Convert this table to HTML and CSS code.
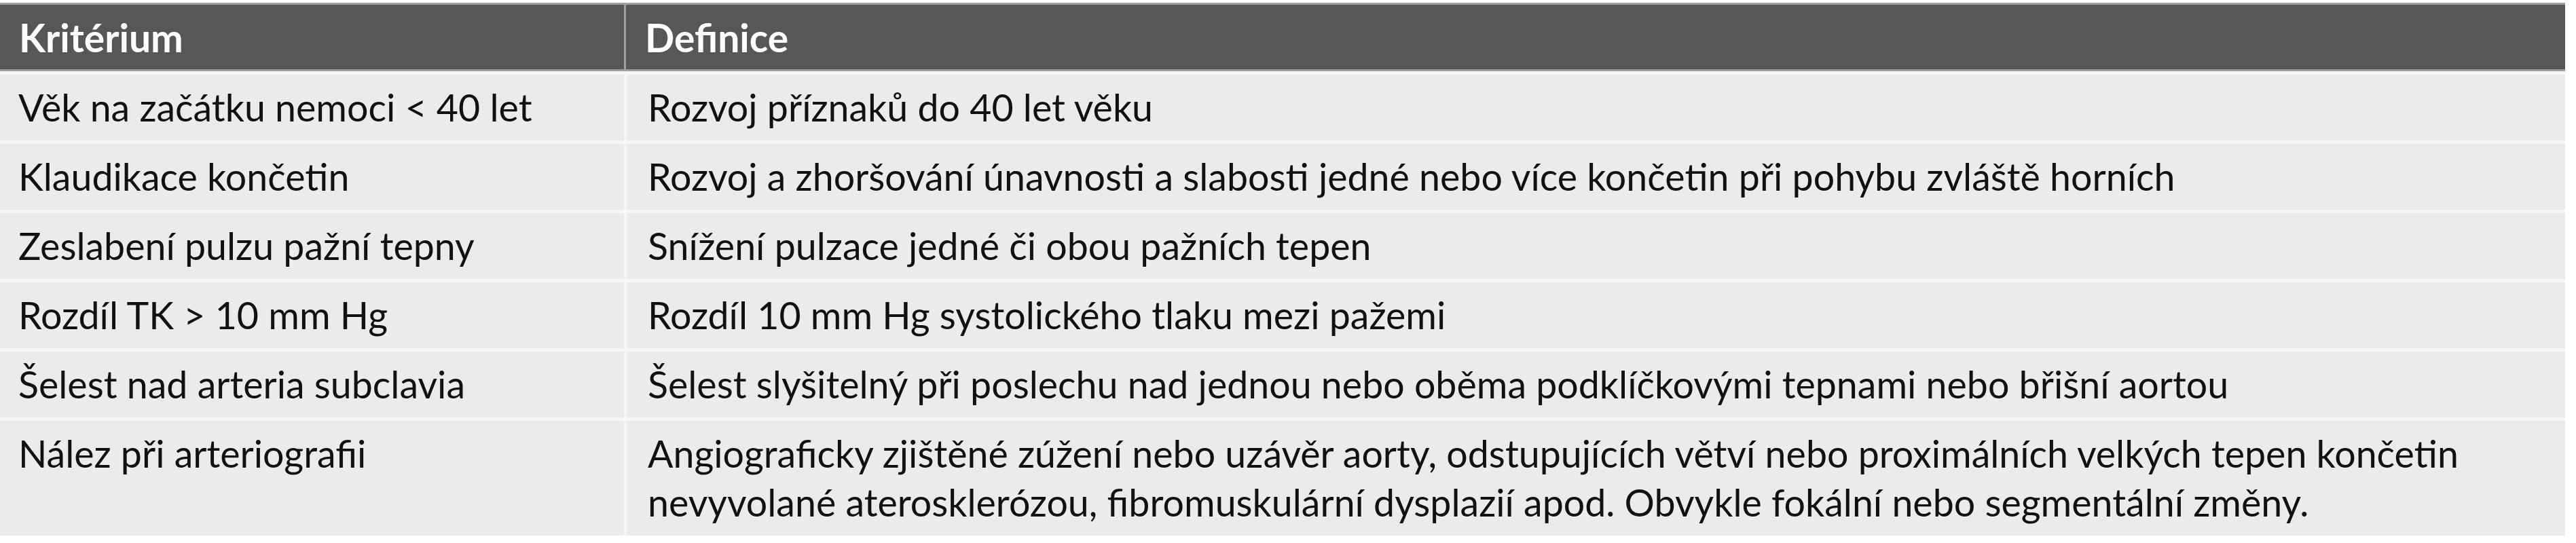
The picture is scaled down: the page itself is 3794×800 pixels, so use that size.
FILE: index.html
```html
<!DOCTYPE html>
<html lang="cs">
<head>
<meta charset="utf-8">
<title>Kritéria</title>
<link rel="stylesheet" href="styles.css">
</head>
<body>
<div class="table">
  <div class="head">
    <div class="th">Kritérium</div>
    <div class="th">Definice</div>
  </div>
  <div class="row">
    <div class="td">Věk na začátku nemoci &lt; 40 let</div>
    <div class="td">Rozvoj příznaků do 40 let věku</div>
  </div>
  <div class="row">
    <div class="td">Klaudikace končetin</div>
    <div class="td">Rozvoj a zhoršování únavnosti a slabosti jedné nebo více končetin při pohybu zvláště horních</div>
  </div>
  <div class="row">
    <div class="td">Zeslabení pulzu pažní tepny</div>
    <div class="td">Snížení pulzace jedné či obou pažních tepen</div>
  </div>
  <div class="row">
    <div class="td">Rozdíl TK &gt; 10 mm Hg</div>
    <div class="td">Rozdíl 10 mm Hg systolického tlaku mezi pažemi</div>
  </div>
  <div class="row">
    <div class="td">Šelest nad arteria subclavia</div>
    <div class="td">Šelest slyšitelný při poslechu nad jednou nebo oběma podklíčkovými tepnami nebo břišní aortou</div>
  </div>
  <div class="row">
    <div class="td">Nález při arteriografii</div>
    <div class="td">Angiograficky zjištěné zúžení nebo uzávěr aorty, odstupujících větví nebo proximálních velkých tepen končetin<br>nevyvolané aterosklerózou, fibromuskulární dysplazií apod. Obvykle fokální nebo segmentální změny.</div>
  </div>
</div>
</body>
</html>
```
FILE: styles.css
```css
html, body {
  margin: 0;
  padding: 0;
  background: #ffffff;
}
body {
  padding-top: 4px;
  font-family: Lato, "Liberation Sans", sans-serif;
  font-size: 55.5px;
  line-height: 72px;
  color: #111111;
}
.table {
  width: 3778px;
  display: flex;
  flex-direction: column;
  gap: 5px;
  background: #f6f6f6;
}
.head {
  display: grid;
  grid-template-columns: 919px 1fr;
  column-gap: 3px;
  background: #a0a0a0;
  padding: 3px 0;
}
.th {
  background: #575757;
  color: #ffffff;
  font-weight: bold;
  font-size: 57px;
  height: 95px;
  display: flex;
  align-items: center;
  padding-left: 28px;
}
.row {
  display: grid;
  grid-template-columns: 919px 1fr;
  column-gap: 4px;
}
.td {
  background: #ebebeb;
  padding: 12px 20px 13px 27px;
  white-space: nowrap;
}
.td + .td {
  padding-left: 31px;
}
```
